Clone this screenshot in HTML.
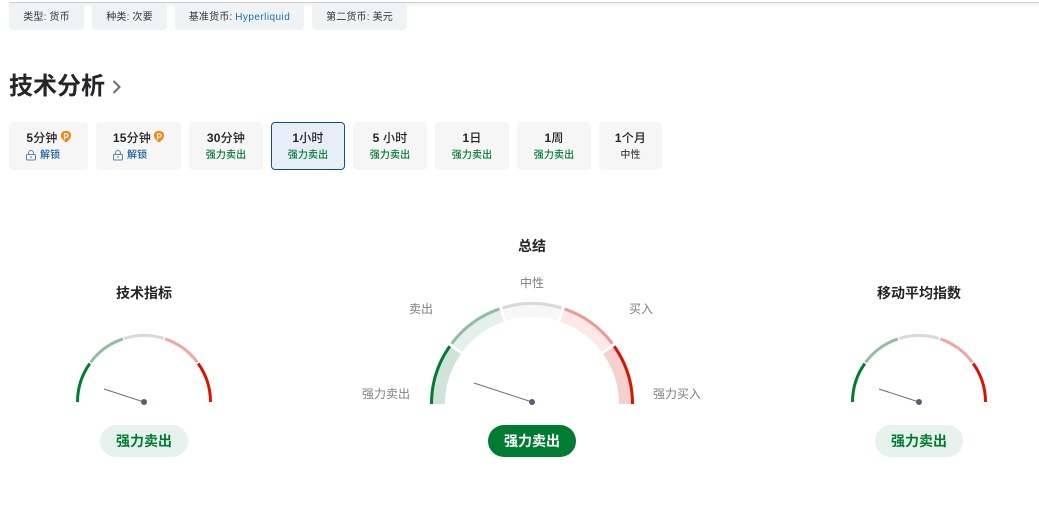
<!DOCTYPE html>
<html lang="zh"><head><meta charset="utf-8"><title>技术分析</title>
<style>
html,body{margin:0;padding:0;background:#fff;height:511px;overflow:hidden}
body{width:1039px;position:relative;font-family:"Liberation Sans","Noto Sans CJK SC",sans-serif;color:#232526}
.a{position:absolute;white-space:nowrap}
.c{transform:translateX(-50%)}
.chip{top:4px;height:26px;line-height:28px;background:#f0f3f6;border-radius:0 0 4px 4px;font-size:10px;letter-spacing:.15px;text-align:center;color:#333}
.chip b{font-weight:400;color:#1a6fb5;letter-spacing:.45px}
.tab{top:122px;height:48px;background:#f6f6f6;border-radius:4px;text-align:center;box-sizing:border-box;padding-top:8px}
.tab .t{font-size:12px;font-weight:500;line-height:16px;color:#232526;letter-spacing:.2px}
.tab .t b{font-weight:700}
.tab .s{font-size:10px;line-height:16px;margin-top:2px;font-weight:500;color:#007c32;letter-spacing:.1px}
.tab.on{background:#e8eef7;border:1px solid #0f4d92;padding-top:7px}
.tab .n{color:#444}
.tab .u{color:#1a5fa0;text-align:left;padding-left:31px}
.ti{font-size:14px;font-weight:700;line-height:18px}
.lb{font-size:12px;color:#808080;line-height:16px}
.bd{top:425px;width:88px;height:32px;line-height:32px;border-radius:16px;text-align:center;font-size:14px;font-weight:700;background:#e6f2eb;color:#007c32}
.bd.big{background:#007c32;color:#fff}
svg{position:absolute;left:0;top:0}
</style></head><body>
<div class="a" style="left:9px;right:0;top:2px;height:1px;background:#cfcfcf"></div>
<div class="a" style="left:9px;right:0;top:3px;height:5px;background:linear-gradient(#f1f1f1,#fff)"></div>
<div class="a chip" style="left:9px;width:75px">类型: 货币</div>
<div class="a chip" style="left:92px;width:75px">种类: 次要</div>
<div class="a chip" style="left:175px;width:129px">基准货币: <b>Hyperliquid</b></div>
<div class="a chip" style="left:312px;width:95px">第二货币: 美元</div>
<div class="a" style="left:9px;top:71px;font-size:24px;font-weight:700;line-height:32px;color:#232526">技术分析</div>

<div class="a tab" style="left:9px;width:79px"><div class="t" style="padding-right:13px"><b>5</b>分钟</div><div class="s u">解锁</div></div>
<div class="a tab" style="left:96px;width:85px"><div class="t" style="padding-right:13px"><b>15</b>分钟</div><div class="s u">解锁</div></div>
<div class="a tab" style="left:189px;width:74px"><div class="t"><b>30</b>分钟</div><div class="s">强力卖出</div></div>
<div class="a tab on" style="left:271px;width:74px"><div class="t"><b>1</b>小时</div><div class="s">强力卖出</div></div>
<div class="a tab" style="left:353px;width:74px"><div class="t"><b>5</b> 小时</div><div class="s">强力卖出</div></div>
<div class="a tab" style="left:435px;width:74px"><div class="t"><b>1</b>日</div><div class="s">强力卖出</div></div>
<div class="a tab" style="left:517px;width:74px"><div class="t"><b>1</b>周</div><div class="s">强力卖出</div></div>
<div class="a tab" style="left:599px;width:63px"><div class="t"><b>1</b>个月</div><div class="s n">中性</div></div>

<svg width="1039" height="511" viewBox="0 0 1039 511">
<path d="M113.5 81l6 6-6 6" fill="none" stroke="#6a6d78" stroke-width="2"/>
<!-- big gauge bands -->
<g fill="none" stroke-width="15">
<path d="M437.5 404A94.5 94.5 0 0 1 454.69 349.66" stroke="#cde4d6"/>
<path d="M456.43 347.26A94.5 94.5 0 0 1 501.39 314.59" stroke="#e5f0ea"/>
<path d="M504.22 313.68A94.5 94.5 0 0 1 559.78 313.68" stroke="#f7f7f7"/>
<path d="M562.61 314.59A94.5 94.5 0 0 1 607.57 347.26" stroke="#fbe8e7"/>
<path d="M609.31 349.66A94.5 94.5 0 0 1 626.5 404" stroke="#f6d0cc"/>
</g>
<g fill="none" stroke-width="3">
<path d="M431.5 404A100.5 100.5 0 0 1 449.78 346.21" stroke="#007c32"/>
<path d="M451.63 343.66A100.5 100.5 0 0 1 499.45 308.92" stroke="#8fbea1"/>
<path d="M502.45 307.94A100.5 100.5 0 0 1 561.55 307.94" stroke="#d9d9d9"/>
<path d="M564.55 308.92A100.5 100.5 0 0 1 612.37 343.66" stroke="#ee9a94"/>
<path d="M614.22 346.21A100.5 100.5 0 0 1 632.5 404" stroke="#d91400"/>
</g>
<!-- small gauges -->
<g fill="none" stroke-width="3" transform="translate(144 402)">
<path d="M-66.5 0A66.5 66.5 0 0 1 -54.2 -38.52" stroke="#007c32"/>
<path d="M-53.39 -39.65A66.5 66.5 0 0 1 -21.21 -63.03" stroke="#8fbea1"/>
<path d="M-19.88 -63.46A66.5 66.5 0 0 1 19.88 -63.46" stroke="#d9d9d9"/>
<path d="M21.21 -63.03A66.5 66.5 0 0 1 53.39 -39.65" stroke="#eea8a2"/>
<path d="M54.2 -38.52A66.5 66.5 0 0 1 66.5 0" stroke="#d91400"/>
</g>
<g fill="none" stroke-width="3" transform="translate(919 402)">
<path d="M-66.5 0A66.5 66.5 0 0 1 -54.2 -38.52" stroke="#007c32"/>
<path d="M-53.39 -39.65A66.5 66.5 0 0 1 -21.21 -63.03" stroke="#8fbea1"/>
<path d="M-19.88 -63.46A66.5 66.5 0 0 1 19.88 -63.46" stroke="#d9d9d9"/>
<path d="M21.21 -63.03A66.5 66.5 0 0 1 53.39 -39.65" stroke="#eea8a2"/>
<path d="M54.2 -38.52A66.5 66.5 0 0 1 66.5 0" stroke="#d91400"/>
</g>
<g stroke="#6a6d78" stroke-width="1" fill="none">
<path d="M474 383L532 402"/><path d="M104 389L144 402"/><path d="M879 389L919 402"/>
</g>
<g fill="#5b5e6e"><circle cx="532" cy="402" r="3"/><circle cx="144" cy="402" r="3"/><circle cx="919" cy="402" r="3"/></g>
<!-- P badges -->
<g><path d="M66 131c3.2 0 5 1.600 5 4.200 0 3.100-2.600 5.700-5 7-2.400-1.300-5-3.900-5-7 0-2.600 1.800-4.200 5-4.200z" fill="#f7820c"/><path d="M64.500 140v-6.200h1.900a1.700 1.700 0 0 1 0 3.500h-1.900" fill="none" stroke="#fff" stroke-width="1.200"/></g>
<g><path d="M159 131c3.200 0 5 1.600 5 4.200 0 3.100-2.600 5.700-5 7-2.400-1.300-5-3.900-5-7 0-2.600 1.800-4.200 5-4.200z" fill="#f7820c"/><path d="M157.500 140v-6.200h1.900a1.700 1.700 0 0 1 0 3.500h-1.900" fill="none" stroke="#fff" stroke-width="1.200"/></g>
<!-- locks -->
<g fill="none" stroke="#5f84ad" stroke-width="1"><rect x="26.500" y="154.500" width="9" height="5.500" rx="1"/><path d="M28.500 154.500v-1.500a2.500 2.500 0 0 1 5 0v1.500"/><path d="M30 157h2"/>
<rect x="113.500" y="154.500" width="9" height="5.500" rx="1"/><path d="M115.500 154.500v-1.500a2.500 2.500 0 0 1 5 0v1.500"/><path d="M117 157h2"/></g>
</svg>

<div class="a c ti" style="left:532px;top:237px">总结</div>
<div class="a c ti" style="left:144px;top:284px">技术指标</div>
<div class="a c ti" style="left:919px;top:284px">移动平均指数</div>
<div class="a c lb" style="left:532px;top:275px">中性</div>
<div class="a c lb" style="left:421px;top:301px">卖出</div>
<div class="a c lb" style="left:641px;top:301px">买入</div>
<div class="a c lb" style="left:386px;top:386px">强力卖出</div>
<div class="a c lb" style="left:677px;top:386px">强力买入</div>
<div class="a bd" style="left:100px">强力卖出</div>
<div class="a bd big" style="left:488px">强力卖出</div>
<div class="a bd" style="left:875px">强力卖出</div>
</body></html>
